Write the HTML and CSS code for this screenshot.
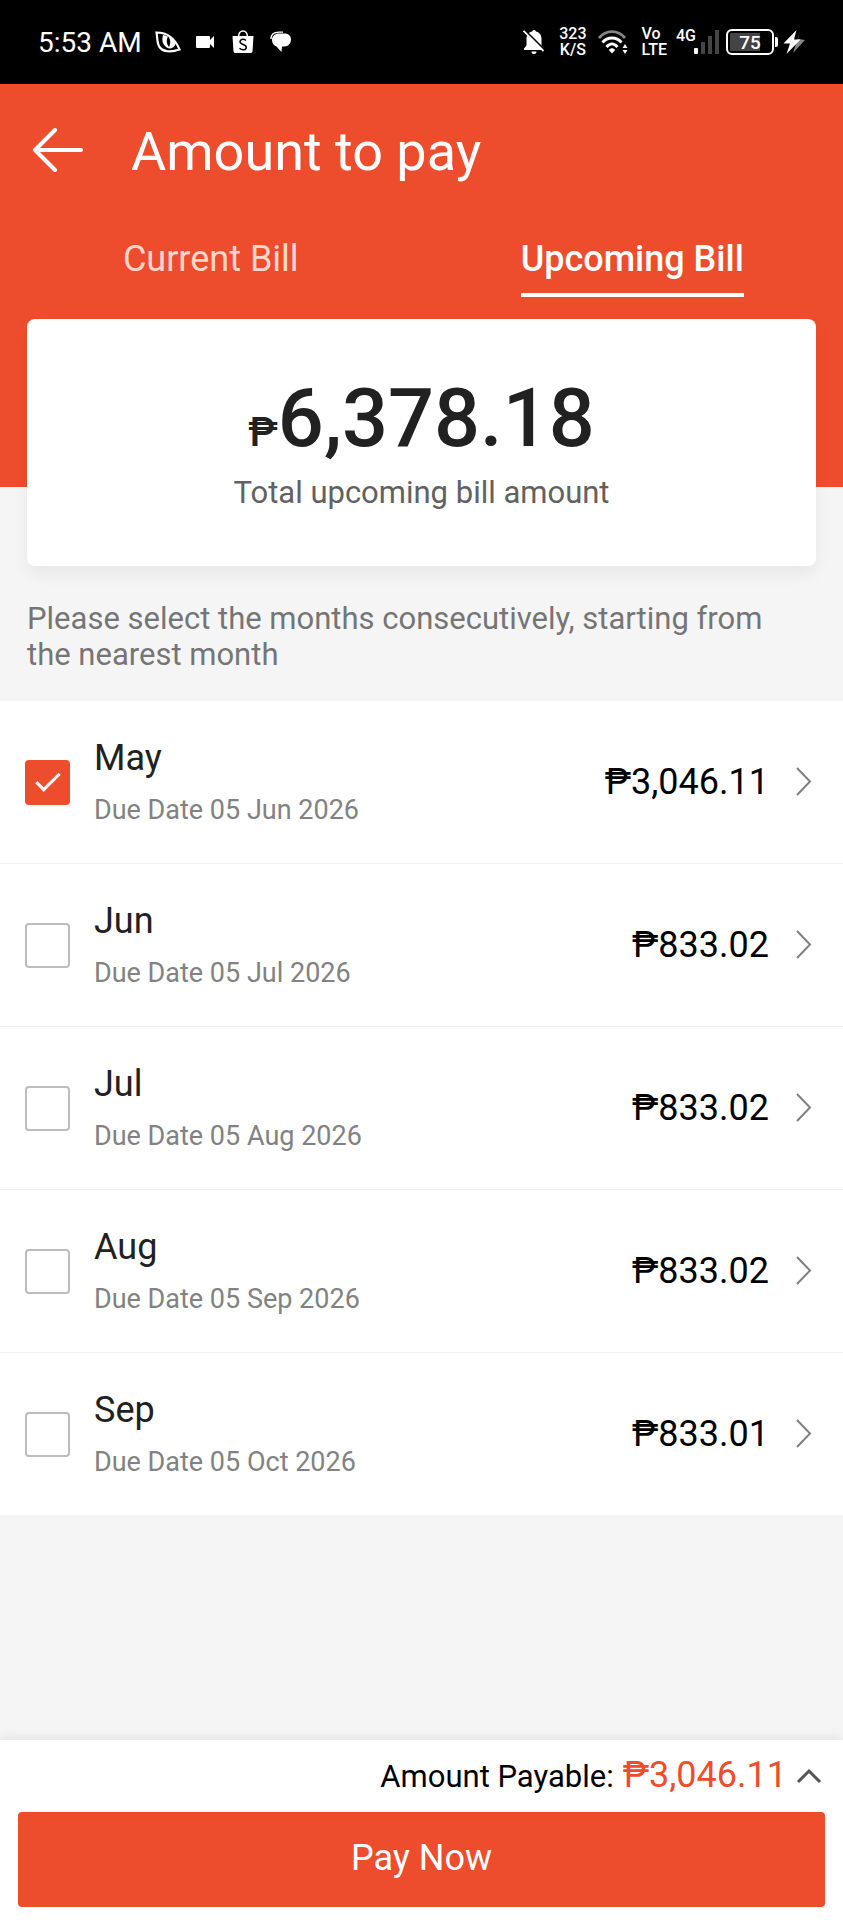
FILE: index.html
```html
<!DOCTYPE html>
<html lang="en">
<head>
    <meta charset="UTF-8">
    <meta name="viewport" content="width=device-width, initial-scale=1.0">
    <title>Amount to pay</title>
    <link rel="stylesheet" href="styles.css">
</head>
<body>
    <!-- Status bar -->
    <div class="status-bar">
        <div class="status-left">
            <span class="clock">5:53 AM</span>
            <svg class="icon-eye" width="26" height="22" viewBox="0 0 26 22">
                <path d="M1.500 1.500C9 1.500 19 5 24.500 18.500C16 21.500 8 21 4.500 16C1.800 12 2.500 7 1.500 1.500Z" fill="none" stroke="#fff" stroke-width="2.200"/>
                <path d="M8 4C14 5 19 8 20.500 13C19 18 13 19 10 15C7 12 7 8 8 4Z" fill="#fff"/>
                <path d="M13 5.500C11 9 11.500 13 14 16C16 12 15.500 8 13 5.500Z" fill="#000"/>
            </svg>
            <svg class="icon-camera" width="19" height="14" viewBox="0 0 19 14">
                <path d="M1 1h12a1 1 0 0 1 1 1v3l4-4v12l-4-4v3a1 1 0 0 1-1 1H1a1 1 0 0 1-1-1V2a1 1 0 0 1 1-1z" fill="#fff"/>
            </svg>
            <svg class="icon-bag" width="22" height="24" viewBox="0 0 22 24">
                <path d="M6.500 7C6.500-1 15.500-1 15.500 7" fill="none" stroke="#fff" stroke-width="1.600"/>
                <path d="M0.500 6h21l-1 15.500a2 2 0 0 1-2 1.500h-15a2 2 0 0 1-2-1.500z" fill="#fff"/>
                <path d="M14 10.500C11.500 8.500 8 9.300 8 11.800C8 15 14.300 14 14.300 17.200C14.300 20.300 10 20.500 7.500 18.200" fill="none" stroke="#000" stroke-width="1.500"/>
            </svg>
            <svg class="icon-chat" width="22" height="22" viewBox="0 0 22 22">
                <path d="M1 8C1 3.500 4 1.200 9 1.200h4" fill="none" stroke="#fff" stroke-width="1.300"/>
                <path d="M9 2.500h5.500c4 0 6.500 2.500 6.500 6s-2.500 7-6.500 7h-2.500L11.500 21L6.500 15.500C3.500 14.500 2 12 2 9c0-4 3-6.500 7-6.500z" fill="#fff"/>
            </svg>
        </div>
        <div class="status-right">
            <svg class="icon-bell" width="22" height="26" viewBox="0 0 22 26">
                <path d="M11 1a2 2 0 0 1 2 1.500c4 1 5.500 4 5.500 7.500v6.500l2.500 3v1.500H1v-1.500l2.500-3V10c0-3.500 1.500-6.500 5.500-7.500A2 2 0 0 1 11 1zM8.500 22.500h5a2.500 2.500 0 0 1-5 0z" fill="#fff"/>
                <path d="M2 1.500L22 21.500" stroke="#000" stroke-width="2"/>
                <path d="M0.500 1.800L20.500 22" stroke="#fff" stroke-width="1.800"/>
            </svg>
            <span class="stacked">323<br>K/S</span>
            <svg class="icon-wifi" width="30" height="25" viewBox="0 0 30 25">
                <path d="M1 8C8-0.500 20-0.500 27 8" fill="none" stroke="#858585" stroke-width="2.800"/>
                <path d="M4.500 12.500C9.500 6.500 18.500 6.500 23.500 12.500M8.500 17C12 12.800 16 12.800 19.500 17" fill="none" stroke="#fff" stroke-width="2.800"/>
                <path d="M10.800 20C13 17.800 15 17.800 17.200 20L14 23.500zM27 14l2.500 4h-5zM24.500 20h5L27 24z" fill="#fff"/>
            </svg>
            <span class="stacked stacked-left">Vo<br>LTE</span>
            <span class="network">4G</span>
            <svg class="icon-signal" width="26" height="26" viewBox="0 0 26 26">
                <rect x="0" y="19" width="4" height="6" rx="1" fill="#fff"/>
                <path d="M7 13h4v12H7zM14 7h4v18h-4zM21 1h4v24h-4z" fill="#444"/>
            </svg>
            <span class="battery">75</span>
            <svg class="icon-bolt" width="23" height="26" viewBox="0 0 23 26">
                <path d="M17 2L15 10L22 11L10 24L13 15z" fill="#858585"/>
                <path d="M13.500 1L0.500 14.500H7L3.500 25L17.500 10.500H11z" fill="#fff"/>
            </svg>
        </div>
    </div>

    <!-- Header and tabs -->
    <header class="header">
        <div class="title-row">
            <button class="back" aria-label="Back">
                <svg width="52" height="48" viewBox="0 0 52 48">
                    <path d="M23 2L3 22L23 42M3 22H49" fill="none" stroke="#fff" stroke-width="4" stroke-linecap="round" stroke-linejoin="round"/>
                </svg>
            </button>
            <h1>Amount to pay</h1>
        </div>
        <nav class="tabs">
            <button class="tab">Current Bill</button>
            <button class="tab active">Upcoming Bill</button>
        </nav>
    </header>

    <main>
        <section class="total-card">
            <p class="total"><span class="currency">₱</span>6,378.18</p>
            <p class="total-label">Total upcoming bill amount</p>
        </section>

        <p class="hint">Please select the months consecutively, starting from the nearest month</p>

        <!-- Monthly bills -->
        <ul class="bills">
            <li class="bill">
                <input type="checkbox" id="may" checked>
                <label for="may"><span class="month">May</span><span class="due">Due Date 05 Jun 2026</span></label>
                <a href="#may" class="price">₱3,046.11
                    <svg width="16" height="30" viewBox="0 0 16 30"><path d="M1 1L14 14.500L1 28"/></svg>
                </a>
            </li>
            <li class="bill">
                <input type="checkbox" id="jun">
                <label for="jun"><span class="month">Jun</span><span class="due">Due Date 05 Jul 2026</span></label>
                <a href="#jun" class="price">₱833.02
                    <svg width="16" height="30" viewBox="0 0 16 30"><path d="M1 1L14 14.500L1 28"/></svg>
                </a>
            </li>
            <li class="bill">
                <input type="checkbox" id="jul">
                <label for="jul"><span class="month">Jul</span><span class="due">Due Date 05 Aug 2026</span></label>
                <a href="#jul" class="price">₱833.02
                    <svg width="16" height="30" viewBox="0 0 16 30"><path d="M1 1L14 14.500L1 28"/></svg>
                </a>
            </li>
            <li class="bill">
                <input type="checkbox" id="aug">
                <label for="aug"><span class="month">Aug</span><span class="due">Due Date 05 Sep 2026</span></label>
                <a href="#aug" class="price">₱833.02
                    <svg width="16" height="30" viewBox="0 0 16 30"><path d="M1 1L14 14.500L1 28"/></svg>
                </a>
            </li>
            <li class="bill">
                <input type="checkbox" id="sep">
                <label for="sep"><span class="month">Sep</span><span class="due">Due Date 05 Oct 2026</span></label>
                <a href="#sep" class="price">₱833.01
                    <svg width="16" height="30" viewBox="0 0 16 30"><path d="M1 1L14 14.500L1 28"/></svg>
                </a>
            </li>
        </ul>
    </main>

    <!-- Payment footer -->
    <footer class="footer">
        <div class="payable">
            <span>Amount Payable:</span>
            <span class="payable-amount">₱3,046.11</span>
            <button class="expand" aria-label="Show details">
                <svg width="26" height="18" viewBox="0 0 26 18"><path d="M2 15L13 4L24 15" fill="none" stroke="#555" stroke-width="3"/></svg>
            </button>
        </div>
        <button class="pay">Pay Now</button>
    </footer>
</body>
</html>
```
FILE: styles.css
```css
* {
    box-sizing: border-box;
}

body {
    margin: 0;
    min-height: 100vh;
    display: flex;
    flex-direction: column;
    font-family: Roboto, Arial, sans-serif;
    background-color: #f5f5f5;
    color: #212121;
}

h1,
p,
ul {
    margin: 0;
    padding: 0;
    font-weight: normal;
}

button {
    padding: 0;
    border: none;
    background: none;
    font-family: inherit;
    cursor: pointer;
}

svg {
    display: block;
    flex-shrink: 0;
}

/* Status bar */
.status-bar {
    display: flex;
    justify-content: space-between;
    align-items: center;
    height: 84px;
    padding: 0 37px 0 38px;
    background-color: #000;
    color: #fff;
}

.status-left,
.status-right {
    display: flex;
    align-items: center;
}

.clock {
    padding-top: 2px;
    font-size: 28px;
    line-height: 32px;
}

.icon-eye {
    margin-left: 13px;
}

.icon-camera {
    margin-left: 15px;
}

.icon-bag {
    margin-left: 17px;
}

.icon-chat {
    margin-left: 16px;
}

.stacked {
    margin-left: 14px;
    font-size: 16px;
    line-height: 16px;
    font-weight: 500;
    text-align: center;
}

.stacked-left {
    text-align: left;
}

.icon-wifi {
    margin-left: 11px;
}

.network {
    align-self: flex-start;
    margin-left: 9px;
    font-size: 16px;
    line-height: 20px;
    font-weight: 500;
}

.icon-signal {
    margin-left: -2px;
}

.battery {
    position: relative;
    width: 48px;
    height: 26px;
    margin-left: 6px;
    border: 2px solid #fff;
    border-radius: 6px;
    background: linear-gradient(to right, #444 75%, #000 75%) content-box;
    padding: 2px;
    font-size: 19px;
    line-height: 19px;
    font-weight: 500;
    text-align: center;
}

.battery::after {
    content: "";
    position: absolute;
    top: 6px;
    right: -6px;
    width: 3px;
    height: 10px;
    border-radius: 0 2px 2px 0;
    background-color: #fff;
}

.icon-bolt {
    margin-left: 9px;
}

/* Header */
.header {
    padding: 36px 0 190px;
    background-color: #ed4d2d;
}

.title-row {
    display: flex;
    align-items: center;
    gap: 47px;
    padding-left: 32px;
    color: #fff;
}

h1 {
    font-size: 54px;
    line-height: 64px;
}

.tabs {
    display: grid;
    grid-template-columns: 1fr 1fr;
    justify-items: center;
    margin-top: 53px;
}

.tab {
    padding-bottom: 12px;
    border-bottom: 4px solid transparent;
    font-size: 36px;
    line-height: 44px;
    color: #fcd6cd;
}

.tab.active {
    border-bottom-color: #fff;
    font-weight: 500;
    color: #fff;
}

/* Total card, pulled up over the header */
.total-card {
    position: relative;
    margin: -168px 27px 0;
    padding: 52px 20px 53px;
    border-radius: 8px;
    background-color: #fff;
    box-shadow: 0 8px 16px rgba(0, 0, 0, 0.06);
    text-align: center;
}

.total {
    font-size: 81px;
    line-height: 96px;
    font-weight: 500;
}

.currency {
    font-size: 40px;
    line-height: 40px;
}

.total-label {
    margin-top: 6px;
    font-size: 31px;
    line-height: 40px;
    color: #616161;
}

.hint {
    margin: 35px 40px 28px 27px;
    font-size: 31px;
    line-height: 36px;
    color: #757575;
}

/* Bills */
.bills {
    list-style: none;
    background-color: #fff;
}

.bill {
    display: flex;
    align-items: center;
    padding: 35px 31px 35px 25px;
    border-bottom: 1px solid #f0f0f0;
}

.bill:last-child {
    border-bottom: none;
}

.bill input {
    appearance: none;
    width: 45px;
    height: 45px;
    margin: 0;
    border: 2px solid #bdbdbd;
    border-radius: 4px;
    background-color: #fff;
}

.bill input:checked {
    display: grid;
    place-items: center;
    border: none;
    background-color: #ed4d2d;
}

.bill input:checked::before {
    content: "";
    width: 21px;
    height: 9px;
    margin-bottom: 6px;
    border-left: 3px solid #fff;
    border-bottom: 3px solid #fff;
    transform: rotate(-45deg);
}

.bill label {
    display: flex;
    flex-direction: column;
    flex: 1;
    gap: 12px;
    padding-left: 24px;
}

.month {
    font-size: 36px;
    line-height: 44px;
}

.due {
    font-size: 27px;
    line-height: 36px;
    color: #828282;
}

.price {
    display: flex;
    align-items: center;
    gap: 27px;
    font-size: 36px;
    line-height: 44px;
    color: #000;
    text-decoration: none;
}

.price svg {
    fill: none;
    stroke: #808080;
    stroke-width: 2;
}

/* Footer */
.footer {
    position: sticky;
    bottom: 0;
    margin-top: auto;
    padding: 13px 18px;
    background-color: #fff;
    box-shadow: 0 -2px 12px rgba(0, 0, 0, 0.08);
}

.payable {
    display: flex;
    justify-content: flex-end;
    align-items: baseline;
    gap: 9px;
    padding-right: 3px;
    font-size: 31px;
    line-height: 44px;
    color: #000;
}

.payable-amount {
    font-size: 36px;
    color: #ed4d2d;
}

.expand {
    align-self: center;
}

.pay {
    display: block;
    width: 100%;
    height: 95px;
    margin-top: 13px;
    padding-bottom: 3px;
    border-radius: 4px;
    background-color: #ed4d2d;
    font-size: 36px;
    color: #fff;
}
```
